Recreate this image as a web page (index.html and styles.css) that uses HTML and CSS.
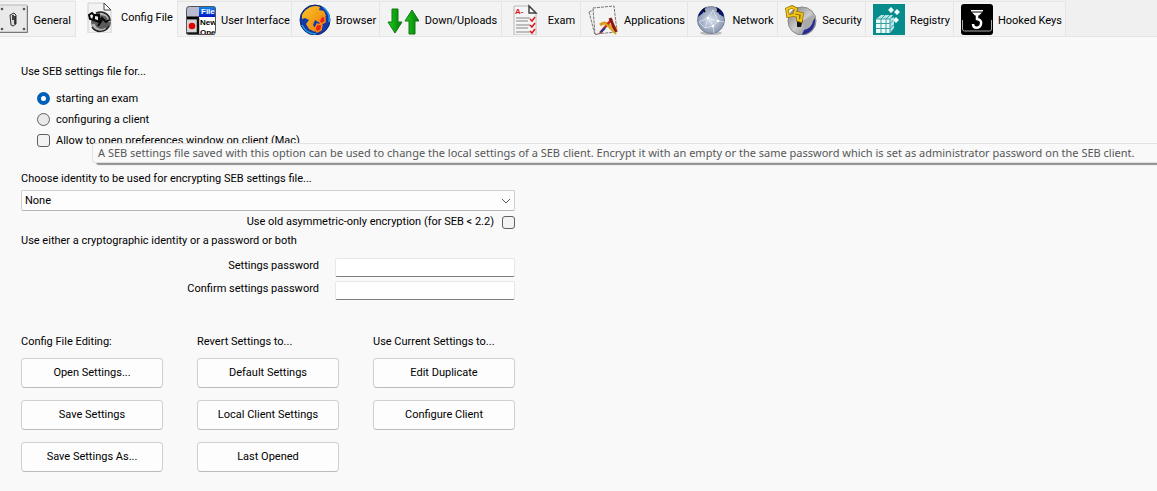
FILE: index.html
```html
<!DOCTYPE html>
<html lang="en">
<head>
<meta charset="utf-8">
<meta name="viewport" content="width=device-width, initial-scale=1">
<title>SEB Config File</title>
<link rel="stylesheet" href="styles.css">
</head>
<body>
<nav class="tabs" role="tablist">
  <button class="tab tab-first" role="tab">
    <svg class="icon" viewBox="0 0 32 32"><rect x="0" y="2" width="31" height="27" fill="#e9e9e9" stroke="#b5b5b5"/><path d="M0 29.5H31.500V3" fill="none" stroke="#777"/><g fill="#555"><circle cx="6" cy="6" r="1.300"/><circle cx="28" cy="6" r="1.300"/><circle cx="6" cy="26" r="1.300"/><circle cx="28" cy="26" r="1.300"/></g><path d="M14 12l4-2 2 2v9l-3 2-2-1z" fill="#ddd" stroke="#333"/><path d="M17 12v5M19 13v8" stroke="#111" stroke-width="1.500"/></svg>
    <span>General</span>
  </button>
  <button class="tab tab-active" role="tab" aria-selected="true">
    <svg class="icon" viewBox="0 0 32 32"><path d="M5 2h16l7 7v23H5z" fill="#f3f3f3" stroke="#d0d0d0"/><path d="M21 2v7h7z" fill="#fff" stroke="#444"/><circle cx="18" cy="21" r="10" fill="#5b5b5b"/><path d="M10 23c2 6 8 8 13 5M17 13c6-1 10 3 9 8" fill="none" stroke="#b5b5b5" stroke-width="3"/><path d="M9 26c4 6 13 6 17-1M13 12c6-3 14 1 14 8" fill="none" stroke="#252525" stroke-width="1.500"/><path d="M6 14l3-2 3 3-1 4-4-1zM11 14h5v7l-5-2zM16 20l3-3 4 4 3-2M19 19l-4 6" fill="none" stroke="#080808" stroke-width="2"/><path d="M12 15l3 1v3l-3-1z" fill="#e9e9e9"/></svg>
    <span>Config File</span>
  </button>
  <button class="tab" role="tab">
    <svg class="icon" viewBox="0 0 32 32"><defs><linearGradient id="menuBlue" x2="0" y2="1"><stop stop-color="#1590f4"/><stop offset="1" stop-color="#0016c5"/></linearGradient><clipPath id="menuClip"><rect x="1" y="3" width="30" height="29" rx="3"/></clipPath></defs><g clip-path="url(#menuClip)"><rect x="1" y="3" width="30" height="29" fill="#fff"/><rect x="1" y="3" width="14" height="11" fill="#b9b9cf"/><rect x="14" y="3" width="17" height="11" fill="url(#menuBlue)"/><path d="M1 15h13" stroke="#000" stroke-width="3"/><rect x="1" y="17" width="11" height="12" fill="#d4d4d4"/><path d="M1 30.500h12V15" fill="none" stroke="#111" stroke-width="2.500"/><circle cx="7" cy="23" r="3.300" fill="#e00000"/><text x="16" y="11" class="glyph glyph-light">File</text><text x="15" y="22" class="glyph">New</text><text x="15" y="32" class="glyph">Ope</text></g><rect x="1.500" y="3.500" width="29" height="28" rx="3" fill="none" stroke="#555"/></svg>
    <span>User Interface</span>
  </button>
  <button class="tab" role="tab">
    <svg class="icon" viewBox="0 0 32 32"><defs><linearGradient id="fox" x2="1" y2="1"><stop stop-color="#ffc32c"/><stop offset="1" stop-color="#e67c00"/></linearGradient></defs><circle cx="16" cy="17" r="15" fill="#123ba8" stroke="#102760"/><path d="M3 12C6 6 14 1 21 4l-1 3 5 1 2 5-3 1-1 4-4 1-3-2-2 5 3 4-1 3-6-3-3-5 3-4-4-2-3 1z" fill="url(#fox)"/><path d="M23 13l3 1v5l-4 2-2-3zM18 21l5 1-1 5-4 2-2-3z" fill="#ee2118" stroke="#f58a18" stroke-width="1.500"/><path d="M24 4c5 4 7 9 6 15M3 22c3 6 8 9 14 9" fill="none" stroke="#1fa0e6" stroke-width="1.500"/></svg>
    <span>Browser</span>
  </button>
  <button class="tab" role="tab">
    <svg class="icon" viewBox="0 0 32 32"><defs><linearGradient id="arrow" x2="1"><stop stop-color="#15d414"/><stop offset="1" stop-color="#08750b"/></linearGradient></defs><path d="M5 6h6v13h4L8 30 1 19h4z" fill="url(#arrow)" stroke="#17751a"/><path d="M22 31h6V18h4L25 7l-7 11h4z" fill="url(#arrow)" stroke="#17751a"/></svg>
    <span>Down/Uploads</span>
  </button>
  <button class="tab" role="tab">
    <svg class="icon" viewBox="0 0 32 32"><path d="M5 3h16l6 7v22H5z" fill="#f5f5f5" stroke="#b8b8b8"/><path d="M20 3v7h7z" fill="#fff" stroke="#444" stroke-width="1.500"/><text x="6" y="11" class="glyph glyph-red">A-</text><path d="M7 15h14M7 18h12M7 22h14M7 25h12M7 29h14" stroke="#aaa" stroke-width="1.500"/><path d="M21 16l2 2 3-4M21 22l2 2 3-4M21 28l2 2 3-4" fill="none" stroke="#e01616" stroke-width="1.500"/></svg>
    <span>Exam</span>
  </button>
  <button class="tab" role="tab">
    <svg class="icon" viewBox="0 0 32 32"><path d="M1 9l6-3 7 24-7 2z" fill="#eee" stroke="#777" stroke-dasharray="3 1"/><path d="M5 5l21-2 3 26-22 2z" fill="#f4f4f4" stroke="#777" stroke-dasharray="3 1"/><path d="M12 22q5-4 9 0t8 3" fill="none" stroke="#dc9b20" stroke-width="3"/><path d="M12 30l12-14" stroke="#cb2017" stroke-width="2.500"/><path d="M22 15l6 14" stroke="#8c1614" stroke-width="3"/><path d="M17 20l11 11" stroke="#d8a426" stroke-width="2"/><path d="M13 29l4-4" stroke="#173d9d" stroke-width="2"/></svg>
    <span>Applications</span>
  </button>
  <button class="tab" role="tab">
    <svg class="icon" viewBox="0 0 32 32"><defs><radialGradient id="net"><stop stop-color="#d9e1ef"/><stop offset="1" stop-color="#8b98b1"/></radialGradient></defs><ellipse cx="16" cy="30" rx="11" ry="2" fill="#bbb"/><circle cx="16" cy="17" r="13.500" fill="url(#net)" stroke="#77839a"/><path d="M3 14C4 9 7 6 11 4l-3 6zM21 4c5 2 8 5 8 10l-5-3z" fill="#061769"/><path d="M8 6l2 3M24 6l-2 3" stroke="#000" stroke-width="1.500"/><path d="M4 19l9-4 5-8 5 11 6 1M13 15l-3 10 8-2 5-5M4 19l6 6M13 15l10 3M18 23l-5-8M18 23l1 7" fill="none" stroke="#f4f7ff" stroke-width=".6"/><g fill="#fff"><circle cx="13" cy="15" r="1.300"/><circle cx="23" cy="18" r="1.300"/><circle cx="18" cy="23" r="1.300"/></g></svg>
    <span>Network</span>
  </button>
  <button class="tab" role="tab">
    <svg class="icon" viewBox="0 0 32 32"><defs><linearGradient id="steel" x2="1" y2="1"><stop stop-color="#777"/><stop offset=".5" stop-color="#ccc"/><stop offset="1" stop-color="#777"/></linearGradient></defs><circle cx="17" cy="18" r="14" fill="url(#steel)" stroke="#888"/><path d="M17 18L28 12q4 12-8 17z" fill="#aaa"/><path d="M30 15q1 14-13 17l2-5q8-2 9-9z" fill="#252a96"/><path d="M12 16l3-2 3 3-2 7h-4z" fill="#171717"/><path d="M2 6l5-2 4 2-2 6-6 1zM9 9l8 2-1 7-3-1v-4l-5-1" fill="none" stroke="#8e7000" stroke-width="3.500"/><path d="M2 6l5-2 4 2-2 6-6 1zM9 9l8 2-1 7-3-1v-4l-5-1" fill="none" stroke="#f4c51b" stroke-width="2"/></svg>
    <span>Security</span>
  </button>
  <button class="tab" role="tab">
    <svg class="icon" viewBox="0 0 32 32"><path d="M0 1h32v31H0z" fill="#078c8e"/><path d="M3 16l5-4h12l-3 4zM17 16l4-2v11l-4 5z" fill="#b7e4e5"/><path d="M3 16h14v14H3z" fill="#effcfc"/><path d="M3 20.500h14l4-4M3 25.500h14l4-4M8 30V16l4-4M13 30V16l4-4M3 16h14v14" fill="none" stroke="#36a0a2"/><path d="M18 4l3 3-3 3-3-3zM24 6l3 3-3 3-3-3zM23 14l3 3-3 3-3-3z" fill="#f2ffff"/></svg>
    <span>Registry</span>
  </button>
  <button class="tab" role="tab">
    <svg class="icon" viewBox="0 0 32 32"><rect y="1" width="32" height="31" rx="3" fill="#000"/><path d="M1.500 17v9q0 2 2 2h25q2 0 2-2v-9" fill="none" stroke="#aaa"/><path d="M10 7h12v1.500H10zM11 9.500h10l-3 3h-4z" fill="#fff"/><path d="M16 12v4q5 1 4 5c-1 5-8 5-8 0" fill="none" stroke="#fff" stroke-width="2.500"/></svg>
    <span>Hooked Keys</span>
  </button>
</nav>

<main class="page">
  <fieldset class="purpose">
    <legend class="line">Use SEB settings file for...</legend>
    <label class="option"><input class="mark radio" type="radio" name="purpose" checked><span>starting an exam</span></label>
    <label class="option"><input class="mark radio" type="radio" name="purpose"><span>configuring a client</span></label>
    <div class="tip-anchor">
      <label class="option"><input class="mark check" type="checkbox"><span>Allow to open preferences window on client (Mac)</span></label>
      <div class="tooltip" role="tooltip">A SEB settings file saved with this option can be used to change the local settings of a SEB client. Encrypt it with an empty or the same password which is set as administrator password on the SEB client.</div>
    </div>
  </fieldset>

  <section class="encryption">
    <label class="line" for="identity">Choose identity to be used for encrypting SEB settings file...</label>
    <div class="select-wrap">
      <select class="select" id="identity"><option>None</option></select>
      <svg class="chevron" viewBox="0 0 10 6"><path d="M1 1l4 4 4-4" fill="none" stroke="#555"/></svg>
    </div>
    <label class="old"><span>Use old asymmetric-only encryption (for SEB &lt; 2.2)</span><input class="mark check" type="checkbox"></label>
    <p class="line">Use either a cryptographic identity or a password or both</p>
    <div class="passwords">
      <label for="pw">Settings password</label><input class="field" id="pw" type="password">
      <label for="pw2">Confirm settings password</label><input class="field" id="pw2" type="password">
    </div>
  </section>

  <section class="actions">
    <div class="group">
      <h2 class="line">Config File Editing:</h2>
      <button class="button">Open Settings...</button>
      <button class="button">Save Settings</button>
      <button class="button">Save Settings As...</button>
    </div>
    <div class="group">
      <h2 class="line">Revert Settings to...</h2>
      <button class="button">Default Settings</button>
      <button class="button">Local Client Settings</button>
      <button class="button">Last Opened</button>
    </div>
    <div class="group">
      <h2 class="line">Use Current Settings to...</h2>
      <button class="button">Edit Duplicate</button>
      <button class="button">Configure Client</button>
    </div>
  </section>
</main>
</body>
</html>
```
FILE: styles.css
```css
* { box-sizing: border-box; }

body {
  margin: 0;
  background: #f9f9f9;
  color: #000;
  font: 11px/16px Roboto, "Liberation Sans", sans-serif;
}

button, input, select { font: inherit; color: inherit; }

.tabs {
  display: grid;
  grid-template-columns: 76px 102px 114px 88px 122px 79px 107px 90px 88px 88px 112px;
  height: 37px;
  background: #f0f0f0;
  border-bottom: 1px solid #e5e5e5;
}

.tab {
  display: flex;
  align-items: center;
  gap: 4px;
  margin: 1px 0 0;
  padding: 0 2px 0 7px;
  border: 0;
  border-top: 1px solid #e5e5e5;
  border-right: 1px solid #e5e5e5;
  background: #f3f3f3;
  white-space: nowrap;
}

.tab span { flex: 1; padding-top: 3px; text-align: center; }
.tab-first { justify-content: flex-end; gap: 6px; padding-right: 4px; overflow: hidden; }
.tab-first span { flex: none; }
.tab-active { margin: 0 0 -1px; padding-bottom: 4px; border-top: 0; background: #f9f9f9; }
.icon { flex: none; width: 32px; height: 32px; }
.glyph { font: bold 8px "Liberation Sans", sans-serif; fill: #000; }
.glyph-light { fill: #fff; }
.glyph-red { fill: #e01616; }

.page { padding: 27px 21px 18px; overflow: clip; }
.line { display: block; margin: 0; padding: 0; font-size: 11px; font-weight: 400; }

.purpose { margin: 0; padding: 0 0 0 16px; border: 0; }
.purpose .line { margin-left: -16px; padding-bottom: 8px; }
.option { display: flex; align-items: center; gap: 6px; width: max-content; height: 21px; }
.tip-anchor { position: relative; }

.mark {
  appearance: none;
  flex: none;
  width: 13px;
  height: 13px;
  margin: 0;
  border: 1px solid #606060;
  background: #f3f3f3;
}
.radio { border-radius: 50%; background: #e9e9e9; }
.radio:checked { border: 4px solid #005fb8; background: #fff; }
.check { border-radius: 3px; }

.tooltip {
  position: absolute;
  top: 13px;
  left: 55px;
  right: -21px;
  height: 20px;
  padding: 0 0 0 5px;
  border: 1px solid #e2e2e2;
  border-right: 0;
  border-radius: 3px 0 0 3px;
  background: #f9f9f9;
  box-shadow: 4px 2px 1px #909090;
  color: #575757;
  font: 11px/18px "Noto Sans", sans-serif;
  white-space: nowrap;
}

.encryption { width: 494px; padding-top: 20px; }
.select-wrap { position: relative; margin-top: 3px; }
.select {
  appearance: none;
  display: block;
  width: 100%;
  height: 21px;
  padding: 0 3px;
  border: 1px solid #cfcfcf;
  border-bottom-color: #b5b5b5;
  border-radius: 2px;
  background: #fdfdfd;
}
.chevron { position: absolute; top: 8px; right: 4px; width: 10px; height: 6px; pointer-events: none; }
.old { display: flex; align-items: center; justify-content: flex-end; gap: 8px; height: 22px; }

.passwords {
  display: grid;
  grid-template-columns: 1fr 180px;
  gap: 4px 16px;
  margin-top: 9px;
  text-align: right;
}
.field {
  width: 100%;
  height: 19px;
  padding: 0 3px;
  border: 1px solid #e8e8e8;
  border-bottom-color: #7d7d7d;
  border-radius: 2px;
  background: #fff;
}

.actions { display: flex; gap: 34px; padding-top: 34px; }
.group { display: flex; flex-direction: column; gap: 12px; width: 142px; }
.group .line { margin-bottom: -4px; white-space: nowrap; }
.button {
  height: 30px;
  border: 1px solid #d0d0d0;
  border-bottom-color: #bababa;
  border-radius: 4px;
  background: #fdfdfd;
}
```
